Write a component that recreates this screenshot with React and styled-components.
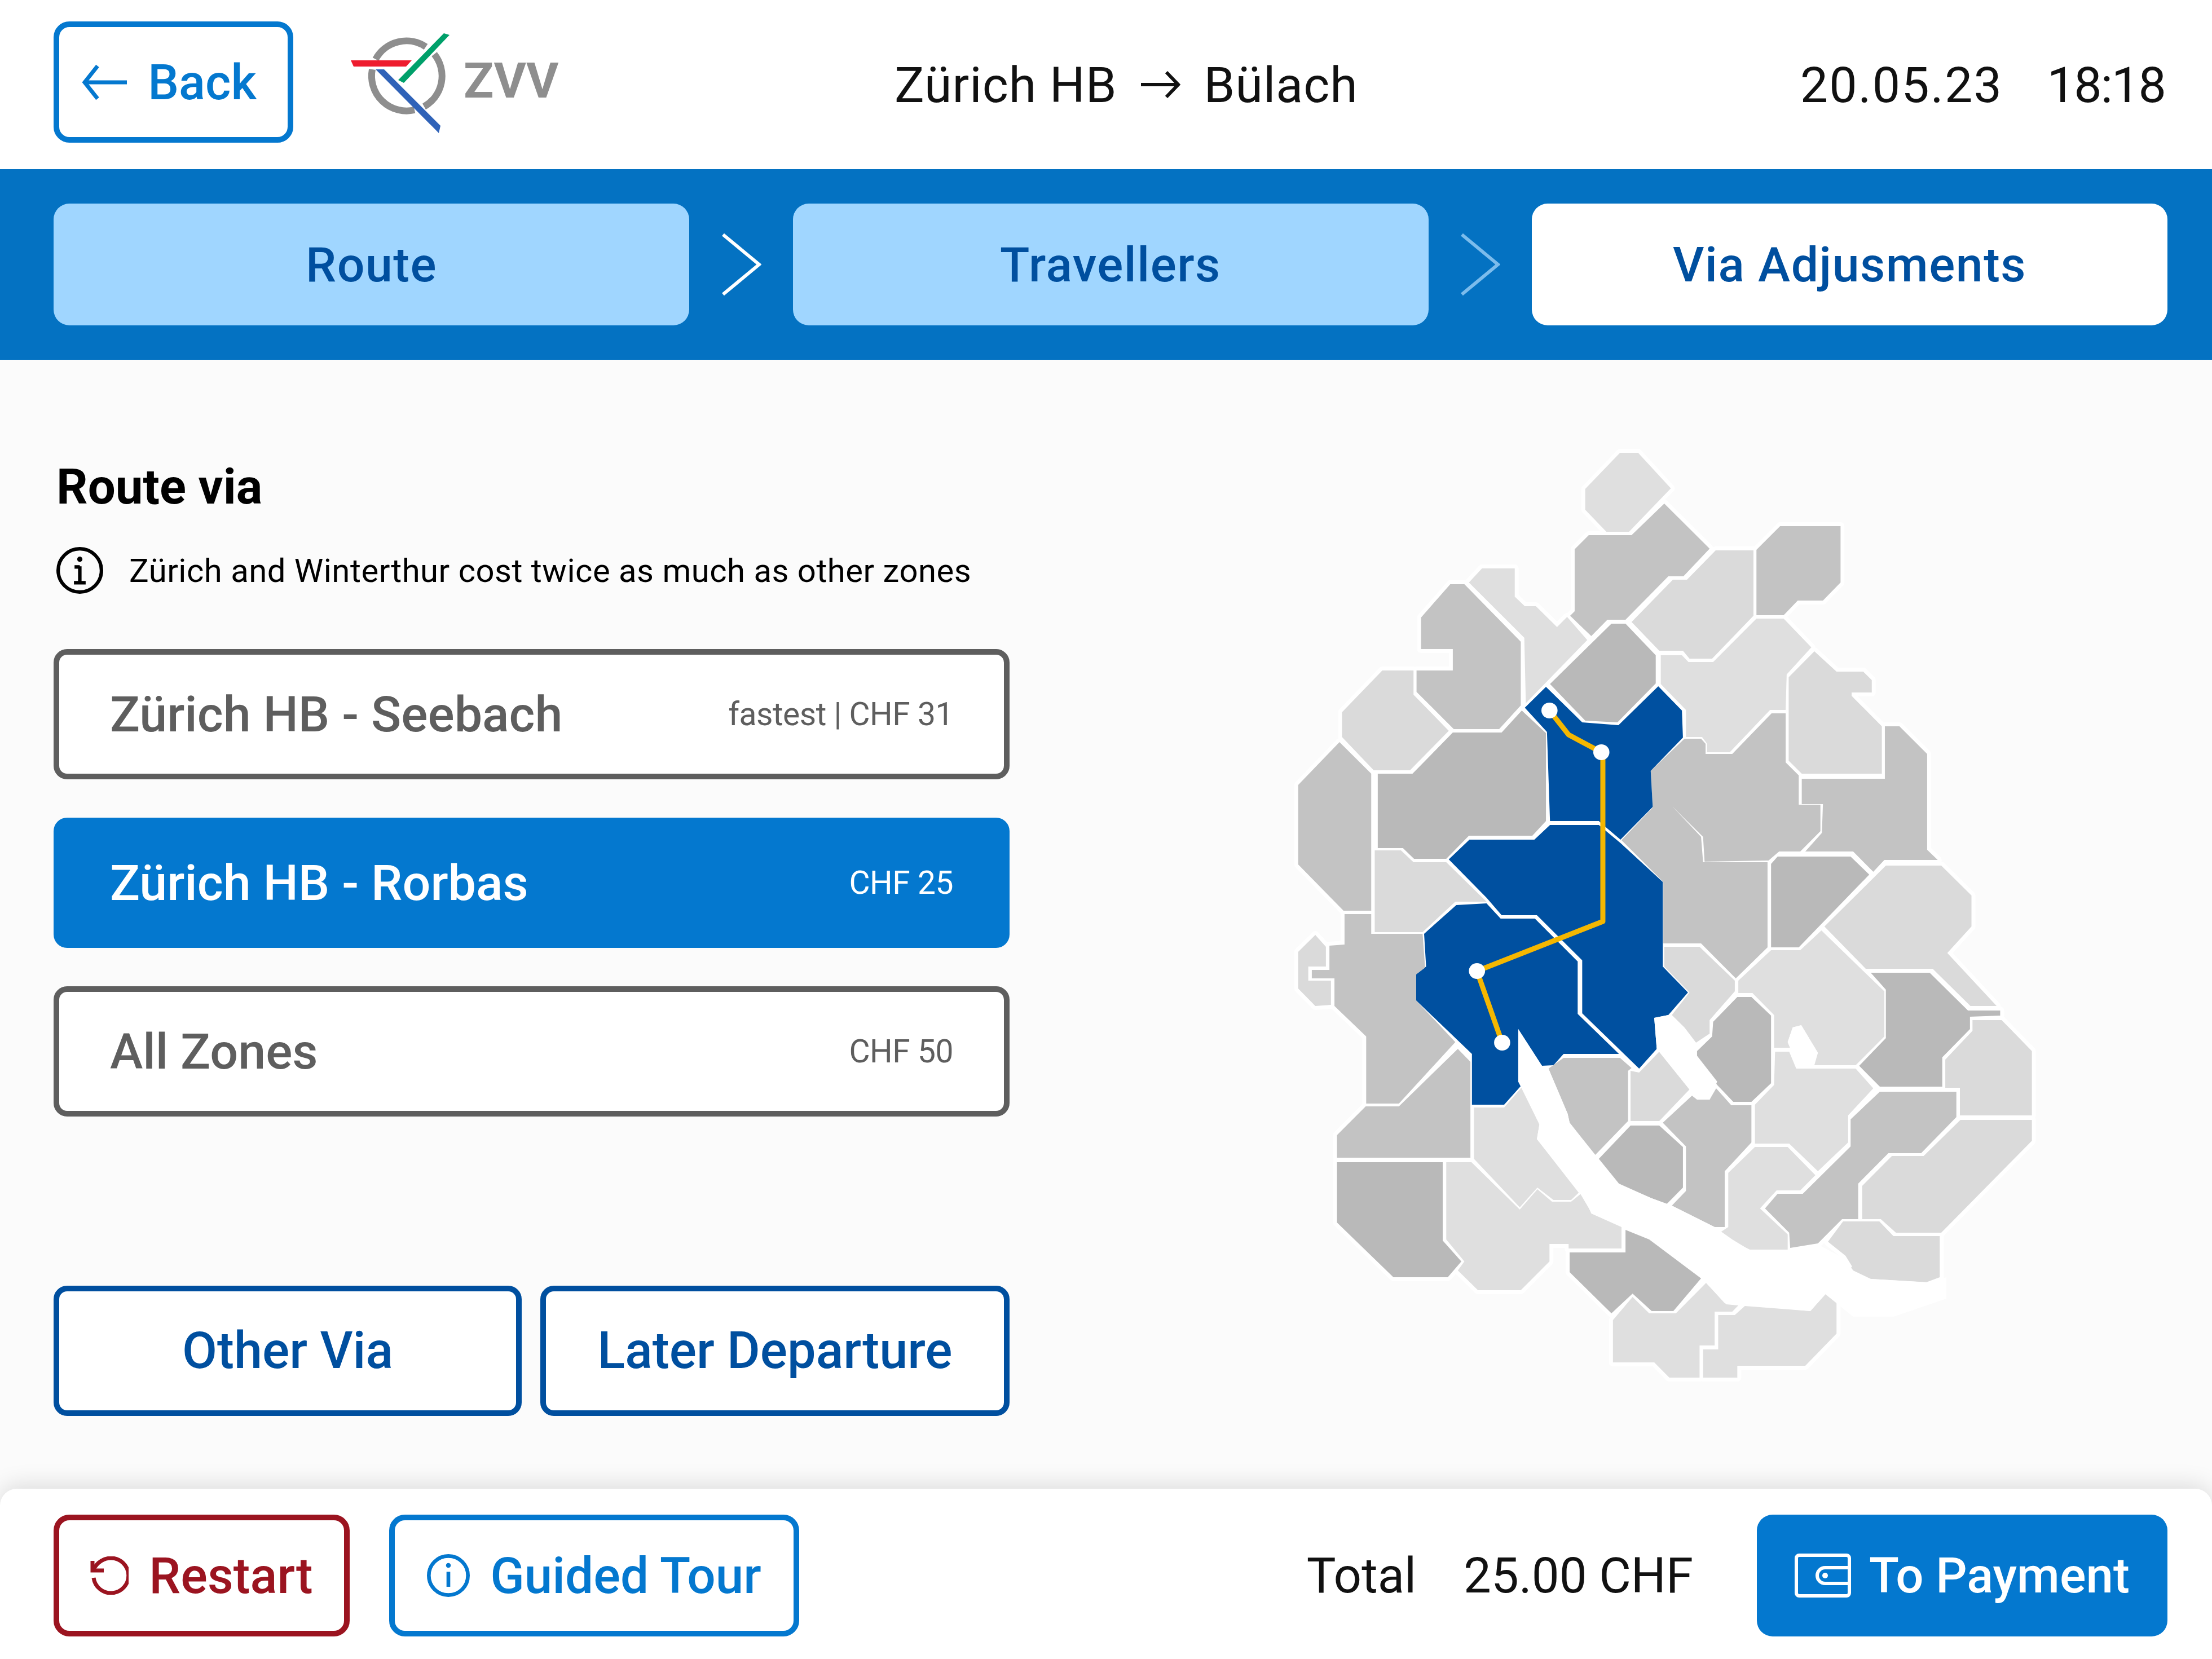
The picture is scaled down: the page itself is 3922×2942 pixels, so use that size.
import React from "react";
import styled, { createGlobalStyle, css } from "styled-components";

const BLUE = "#0478cf";
const NAVY = "#004f9f";
const GREY = "#5e5e5e";
const RED = "#9b1420";

const GlobalStyle = createGlobalStyle`
  html, body {
    margin: 0;
    padding: 0;
    background: #fbfbfb;
    font-family: Roboto, "Noto Sans", "Liberation Sans", sans-serif;
  }
  * { box-sizing: border-box; }
`;

const Page = styled.div`
  width: 3922px;
  height: 2942px;
  display: flex;
  flex-direction: column;
  overflow: hidden;
  background: #fbfbfb;
`;

const Header = styled.header`
  height: 300px;
  flex: none;
  background: #fff;
  display: flex;
  align-items: center;
  padding: 0 83px 0 95px;
`;

const BackButton = styled.button`
  width: 425px;
  height: 215px;
  margin-top: -9px;
  border: 10px solid ${BLUE};
  border-radius: 28px;
  background: #fff;
  color: ${BLUE};
  font: 500 87px Roboto, sans-serif;
  display: flex;
  align-items: center;
  justify-content: center;
  gap: 37px;
  padding: 0 15px 0 0;
`;

const LogoWrap = styled.div`
  margin-left: 98px;
  display: flex;
`;

const Journey = styled.div`
  margin-left: 574px;
  display: flex;
  align-items: center;
  gap: 42px;
  font-size: 88px;
  font-weight: 400;
  letter-spacing: 1px;
  color: #111;
`;

const DateTime = styled.div`
  margin-left: auto;
  display: flex;
  gap: 79px;
  font-size: 88px;
  color: #111;
`;

const ClockPart = styled.span`
  letter-spacing: ${(p) => p.$track}px;
`;

const StepBar = styled.nav`
  height: 338px;
  flex: none;
  background: #0472c2;
  display: flex;
  align-items: center;
  justify-content: space-between;
  padding: 0 79px 0 95px;
`;

const StepPill = styled.div`
  width: 1127px;
  height: 216px;
  border-radius: 28px;
  background: ${(p) => (p.$active ? "#fff" : "#a0d6ff")};
  color: ${NAVY};
  font-size: 86px;
  font-weight: 500;
  letter-spacing: 1.5px;
  display: flex;
  align-items: center;
  justify-content: center;
`;

const Main = styled.main`
  flex: 1;
  display: grid;
  grid-template-columns: 1695px 1400px;
  column-gap: 460px;
  padding: 0 95px;
`;

const LeftColumn = styled.section`
  padding-top: 175px;
  display: flex;
  flex-direction: column;
`;

const Title = styled.h2`
  margin: 0 0 57px 5px;
  font-size: 87px;
  line-height: 100px;
  font-weight: 700;
  color: #000;
`;

const InfoRow = styled.div`
  display: flex;
  align-items: center;
  gap: 46px;
  padding-left: 5px;
  height: 83px;
  font-size: 58px;
  letter-spacing: 0.5px;
  color: #000;
  margin-bottom: 98px;
`;

const Options = styled.div`
  display: flex;
  flex-direction: column;
  gap: 68px;
`;

const Option = styled.div`
  height: 231px;
  border-radius: 24px;
  display: flex;
  align-items: center;
  justify-content: space-between;
  padding: 0 100px;
  ${(p) =>
    p.$selected
      ? css`
          background: ${BLUE};
          color: #fff;
        `
      : css`
          background: #fff;
          color: ${GREY};
          border: 10px solid ${GREY};
          padding: 0 90px;
        `}
`;

const OptionName = styled.span`
  font-size: 88px;
  font-weight: 500;
`;

const OptionMeta = styled.span`
  font-size: 57px;
  letter-spacing: -0.5px;
`;

const ActionRow = styled.div`
  margin-top: 300px;
  display: grid;
  grid-template-columns: 830px 832px;
  gap: 33px;
`;

const OutlineButton = styled.button`
  height: 231px;
  border: 10px solid ${NAVY};
  border-radius: 24px;
  background: #fff;
  color: ${NAVY};
  font: 500 90px Roboto, sans-serif;
`;

const MapPane = styled.div`
  margin-top: 122px;
`;

const Footer = styled.footer`
  height: 302px;
  flex: none;
  background: #fff;
  border-radius: 30px 30px 0 0;
  box-shadow: 0 -6px 40px rgba(0, 0, 0, 0.13);
  position: relative;
  display: flex;
  align-items: flex-start;
  padding: 46px 79px 0 95px;
`;

const FooterButton = styled.button`
  height: 216px;
  width: ${(p) => p.$w}px;
  margin-right: ${(p) => p.$mr || 0}px;
  border-radius: 28px;
  border: 10px solid ${(p) => p.$color};
  background: #fff;
  color: ${(p) => p.$color};
  font: 500 89px Roboto, sans-serif;
  display: flex;
  align-items: center;
  justify-content: center;
  gap: 36px;
  padding: 0;
`;

const Total = styled.div`
  margin-left: auto;
  margin-right: 113px;
  height: 216px;
  display: flex;
  align-items: center;
  gap: 84px;
  font-size: 87px;
  color: #111;
`;

const PayButton = styled(FooterButton)`
  background: ${BLUE};
  border: none;
  color: #fff;
  font-size: 87px;
  gap: 32px;
`;

const ZONE = {
  dark: "#b9b9b9",
  mid: "#c3c3c3",
  light: "#dadada",
  pale: "#dfdfdf",
  blue: "#0050a0",
};

// points: x in zoom units (1.12 per px), y in px from the top of the map
const zones = [
  ["pale", "697,43 733,43 798,106 715,183 670,183 628,144 628,107"],
  ["mid", "785,133 875,213 823,262 793,262 708,339 672,339 640,368 598,332 607,324 607,214 635,189 720,189"],
  ["mid", "1015,173 1135,173 1135,273 1100,305 1050,305 1022,331 968,331 968,215"],
  ["light", "720,343 802,268 830,268 887,216 962,216 962,332 880,408 835,408 822,394 775,394"],
  ["pale", "968,337 1022,337 1077,388 1028,436 1026,499 995,499 915,574 870,574 870,559 860,547 828,547 828,499 778,453 778,402 820,402 833,414 882,414"],
  ["light", "1083,395 1127,431 1180,431 1197,446 1197,468 1157,468 1157,474 1217,528 1217,612 1058,612 1032,589 1032,441"],
  ["mid", "1223,528 1252,528 1307,577 1307,747 1328,765 1222,765 1200,786 1160,750 1065,750 1098,717 1100,666 1058,666 1058,621 1223,621"],
  ["mid", "825,550 858,550 867,559 867,577 920,577 998,505 1026,505 1026,592 1052,615 1052,667 1095,667 1095,714 1055,750 1013,750 992,766 865,768 862,724 803,672 762,672 758,607"],
  ["blue", "550,458 622,521 694,526 773,457 820,500 822,548 758,607 762,671 698,729 665,704 655,696 558,696 552,538 508,495"],
  ["dark", "680,346 708,346 768,402 768,452 692,521 628,518 558,453"],
  ["pale", "423,248 488,248 488,298 508,315 530,315 572,352 592,334 632,375 510,487 507,371 397,273"],
  ["mid", "360,276 388,276 500,378 500,491 457,533 367,533 293,467 293,429 365,429 365,391 302,391 302,335"],
  ["light", "225,429 287,429 287,472 357,536 280,606 208,606 145,547 145,503"],
  ["dark", "365,539 462,539 502,500 550,540 550,696 523,722 397,722 352,763 288,763 266,744 216,744 216,612 285,612"],
  ["mid", "140,556 203,612 203,855 148,855 58,773 58,632"],
  ["light", "210,748 262,748 287,769 352,769 432,839 370,839 305,893 210,893"],
  ["blue", "558,703 655,703 698,735 782,804 782,954 832,1000 793,1040 765,1045 770,1100 735,1135 622,1037 622,943 532,863 462,863 432,832 357,764 398,729 527,729"],
  ["blue", "372,845 432,842 460,869 528,869 613,945 613,1038 695,1109 585,1109 565,1129 542,1130 495,1065 495,1158 500,1166 467,1199 403,1199 403,1109 292,1014 292,968 312,954 308,896"],
  ["light", "92,898 113,919 113,954 78,954 78,979 123,979 123,1022 92,1024 58,993 58,928"],
  ["mid", "150,861 203,861 203,896 305,896 310,956 292,968 292,1014 370,1088 258,1197 193,1197 193,1078 130,1024 130,975 85,975 85,960 120,960 120,917 150,915"],
  ["mid", "375,1100 400,1123 400,1293 135,1293 135,1253 192,1202 258,1202"],
  ["dark", "135,1301 345,1301 345,1440 382,1477 355,1505 247,1505 135,1408"],
  ["pale", "352,1301 402,1301 498,1385 533,1349 562,1371 600,1371 622,1355 640,1392 700,1416 700,1454 595,1454 595,1446 557,1446 557,1477 500,1528 415,1528 375,1493 388,1477 352,1438"],
  ["pale", "407,1204 467,1204 503,1167 537,1234 532,1260 615,1355 600,1368 565,1368 533,1346 498,1381 407,1295"],
  ["mid", "555,1135 585,1116 697,1116 720,1134 713,1139 713,1228 648,1288 597,1231 593,1215"],
  ["light", "718,1139 735,1142 775,1105 835,1172 775,1228 718,1228"],
  ["dark", "718,1236 775,1236 822,1274 822,1346 790,1375 760,1365 695,1339 655,1295"],
  ["mid", "782,1231 840,1183 850,1190 875,1190 888,1170 918,1200 958,1200 958,1266 905,1317 905,1416 885,1416 800,1378 828,1352 828,1273"],
  ["dark", "708,1421 755,1438 858,1507 803,1565 760,1565 722,1534 680,1569 597,1496 597,1461 708,1461"],
  ["pale", "683,1581 722,1540 755,1569 808,1569 868,1515 908,1553 932,1555 920,1566 885,1566 885,1626 855,1626 855,1683 795,1683 765,1656 683,1656"],
  ["pale", "945,1556 1075,1565 1105,1535 1127,1550 1127,1605 1065,1662 930,1662 930,1683 862,1683 862,1633 892,1633 892,1572 925,1572"],
  ["dark", "930,1008 958,1008 997,1041 997,1161 958,1194 922,1194 890,1164 850,1113 850,1104 880,1078 882,1052"],
  ["dark", "1010,759 1155,759 1192,791 1052,920 997,920 997,772"],
  ["light", "785,919 855,919 925,979 925,998 875,1049 875,1073 848,1089 825,1062 800,1040 835,1000 785,954"],
  ["mid", "700,730 762,672 803,672 858,724 862,769 990,769 990,920 927,975 858,913 783,913 783,804"],
  ["pale", "1097,890 1222,998 1222,1078 1165,1129 1083,1129 1090,1107 1057,1058 1040,1062 1030,1088 1035,1098 1003,1098 1003,1040 960,1001 932,1001 932,979 997,925 1055,925"],
  ["light", "1225,775 1335,775 1395,828 1395,883 1347,930 1445,1024 1393,1024 1318,958 1185,958 1103,883"],
  ["dark", "1195,965 1312,965 1388,1032 1452,1032 1452,1041 1392,1043 1392,1065 1337,1115 1337,1167 1213,1167 1172,1130 1225,1081 1225,995"],
  ["light", "1397,1049 1455,1049 1515,1104 1515,1218 1372,1218 1372,1169 1343,1169 1343,1119 1397,1068"],
  ["pale", "1005,1105 1033,1105 1047,1135 1165,1135 1200,1170 1150,1218 1150,1266 1090,1317 1033,1268 965,1268 965,1199 1003,1164"],
  ["mid", "1213,1176 1365,1176 1365,1221 1295,1285 1230,1285 1170,1339 1170,1402 1138,1402 1090,1445 1035,1453 1033,1426 985,1383 1010,1357 1060,1357 1155,1273 1155,1225"],
  ["light", "1373,1226 1515,1226 1515,1263 1335,1426 1245,1426 1215,1402 1178,1402 1178,1343 1237,1290 1300,1290"],
  ["light", "1140,1406 1212,1406 1240,1432 1332,1432 1332,1505 1305,1514 1195,1508 1150,1493 1158,1486 1145,1467 1110,1442"],
  ["pale", "965,1274 1030,1274 1085,1324 1055,1351 1008,1351 975,1383 1030,1429 1030,1456 955,1456 912,1438 895,1426 912,1416 912,1320"],
];

const lakes = [
  "495,1065 542,1130 555,1135 593,1215 597,1231 690,1339 760,1365 800,1378 885,1416 920,1438 955,1457 1030,1457 1090,1447 1145,1473 1160,1493 1195,1508 1310,1514 1345,1505 1345,1543 1240,1575 1160,1575 1105,1535 1075,1565 905,1551 860,1507 755,1435 640,1390 615,1352 532,1260 537,1234 495,1158",
  "765,1045 793,1040 825,1065 850,1097 848,1110 890,1158 875,1190 850,1190 835,1172 770,1100",
  "1040,1062 1057,1058 1090,1107 1080,1128 1047,1134 1040,1110 1030,1088",
];

const ZoneMap = () => (
  <svg width="1400" height="1750" viewBox="0 0 1568 1750" preserveAspectRatio="none" display="block">
    <g fill="#fff" stroke="#fff" strokeWidth="14" strokeLinejoin="round">
      {zones.map(([, pts], i) => (
        <polygon key={i} points={pts} vectorEffect="non-scaling-stroke" />
      ))}
    </g>
    {zones.map(([tone, pts], i) => (
      <polygon key={i} points={pts} fill={ZONE[tone]} />
    ))}
    {lakes.map((pts, i) => (
      <polygon key={i} points={pts} fill="#fff" />
    ))}
    <polyline
      points="557,500 595,543 660,574 663,574 663,874 413,962 463,1089"
      fill="none"
      stroke="#f5b700"
      strokeWidth="9"
      strokeLinejoin="round"
      vectorEffect="non-scaling-stroke"
    />
    <ellipse cx="557" cy="500" rx="16" ry="14" fill="#fff" />
    <ellipse cx="660" cy="574" rx="16" ry="14" fill="#fff" />
    <ellipse cx="413" cy="962" rx="16" ry="14" fill="#fff" />
    <ellipse cx="463" cy="1089" rx="16" ry="14" fill="#fff" />
  </svg>
);

const Logo = () => (
  <svg width="394" height="190" viewBox="615 55 394 190" style={{ display: "block" }}>
    <g fill="none" stroke="#8e8e8e" strokeWidth="12">
      <path d="M663 105A62 62 0 0 1 752 83" />
      <path d="M767 96A62 62 0 0 1 749 189" />
      <path d="M732 195A62 62 0 0 1 657 123" />
    </g>
    <polygon points="784,59 794,62 713,147 703,142" fill="#00a06a" />
    <polygon points="619,107 727,107 717,118 624,118" fill="#ee1c2e" />
    <polygon points="663,123 678,123 778,223 775,236" fill="#2f62b8" />
    <text
      x="819"
      y="173"
      fontFamily="Roboto, sans-serif"
      fontWeight="700"
      fontSize="88"
      fill="#8e8e8e"
      style={{ fontKerning: "none" }}
    >
      ZVV
    </text>
  </svg>
);

const ArrowLeft = () => (
  <svg width="80" height="64" viewBox="0 0 80 64" fill="none" stroke={BLUE} strokeWidth="7">
    <path d="M80 32H6M28 3 5 32l23 29" />
  </svg>
);

const ArrowRight = () => (
  <svg width="70" height="52" viewBox="0 0 70 52" fill="none" stroke="#111" strokeWidth="6">
    <path d="M0 26h64M45 4l21 22-21 22" />
  </svg>
);

const Chevron = ({ dim }) => (
  <svg width="72" height="112" viewBox="0 0 72 112" fill="none" stroke={dim ? "#7cbcec" : "#fff"} strokeWidth="6">
    <path d="M4 3l64 53-64 53" />
  </svg>
);

const InfoIcon = ({ color, foot, size, weight }) => (
  <svg width={size} height={size} viewBox="0 0 80 80" fill="none" stroke={color} strokeWidth={weight}>
    <circle cx="40" cy="40" r={40 - weight / 2} />
    <path d="M40 33v28" />
    {foot && <path d="M31 34h9M30 61h20" />}
    <circle cx="40" cy="21" r="4.5" fill={color} stroke="none" />
  </svg>
);

const RestartIcon = () => (
  <svg width="68" height="68" viewBox="0 0 68 68" fill="none" stroke={RED} strokeWidth="7">
    <path d="M4 8 V25 H24" />
    <path d="M5 25 C12 9 26 3 37 3 A31 31 0 1 1 6 38" />
  </svg>
);

const WalletIcon = () => (
  <svg width="100" height="78" viewBox="0 0 100 78" fill="none" stroke="#fff" strokeWidth="6">
    <rect x="3" y="3" width="94" height="72" rx="5" />
    <path d="M96 25H54a14 14 0 0 0 0 28h42" />
    <circle cx="54" cy="39" r="5" fill="#fff" stroke="none" />
  </svg>
);

const App = () => (
  <Page>
    <GlobalStyle />
    <Header>
      <BackButton>
        <ArrowLeft />
        Back
      </BackButton>
      <LogoWrap>
        <Logo />
      </LogoWrap>
      <Journey>
        Zürich HB
        <ArrowRight />
        Bülach
      </Journey>
      <DateTime>
        <ClockPart $track={2}>20.05.23</ClockPart>
        <ClockPart $track={-2}>18:18</ClockPart>
      </DateTime>
    </Header>

    <StepBar>
      <StepPill>Route</StepPill>
      <Chevron />
      <StepPill>Travellers</StepPill>
      <Chevron dim />
      <StepPill $active>Via Adjusments</StepPill>
    </StepBar>

    <Main>
      <LeftColumn>
        <Title>Route via</Title>
        <InfoRow>
          <InfoIcon color="#000" foot size={83} weight={6} />
          Zürich and Winterthur cost twice as much as other zones
        </InfoRow>
        <Options>
          <Option>
            <OptionName>Zürich HB - Seebach</OptionName>
            <OptionMeta>fastest | CHF 31</OptionMeta>
          </Option>
          <Option $selected>
            <OptionName>Zürich HB - Rorbas</OptionName>
            <OptionMeta>CHF 25</OptionMeta>
          </Option>
          <Option>
            <OptionName>All Zones</OptionName>
            <OptionMeta>CHF 50</OptionMeta>
          </Option>
        </Options>
        <ActionRow>
          <OutlineButton>Other Via</OutlineButton>
          <OutlineButton>Later Departure</OutlineButton>
        </ActionRow>
      </LeftColumn>
      <MapPane>
        <ZoneMap />
      </MapPane>
    </Main>

    <Footer>
      <FooterButton $w={525} $mr={70} $color={RED}>
        <RestartIcon />
        Restart
      </FooterButton>
      <FooterButton $w={727} $color={BLUE}>
        <InfoIcon color={BLUE} size={76} weight={7} />
        Guided Tour
      </FooterButton>
      <Total>
        <span>Total</span>
        <span>25.00 CHF</span>
      </Total>
      <PayButton $w={728}>
        <WalletIcon />
        To Payment
      </PayButton>
    </Footer>
  </Page>
);

export default App;
